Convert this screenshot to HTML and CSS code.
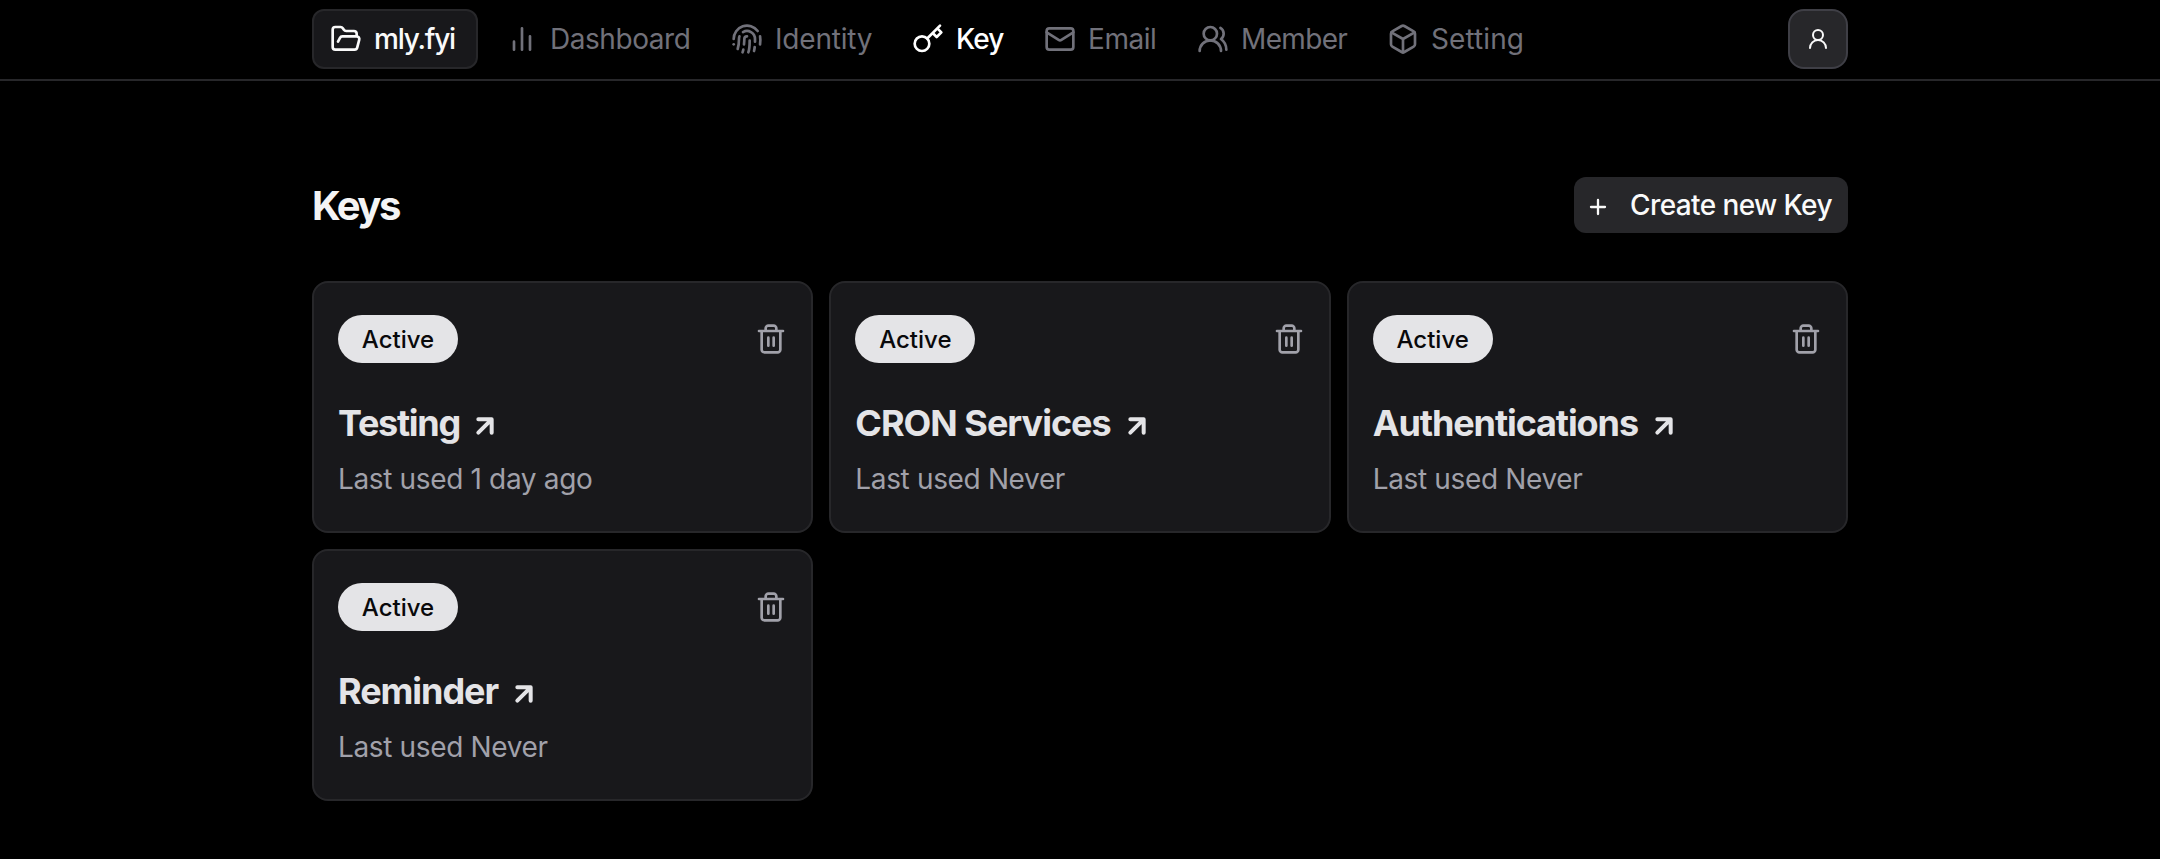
FILE: index.html
```html
<!DOCTYPE html>
<html lang="en">
<head>
<meta charset="utf-8">
<title>Keys</title>
<link rel="stylesheet" href="styles.css">
</head>
<body>
<svg class="sprite" aria-hidden="true">
  <symbol id="trash" viewBox="0 0 24 24"><path d="M3 6h18M19 6v14c0 1-1 2-2 2H7c-1 0-2-1-2-2V6M8 6V4c0-1 1-2 2-2h4c1 0 2 1 2 2v2M10 11v6M14 11v6"/></symbol>
  <symbol id="arrow" viewBox="0 0 24 24"><path d="M7 7h10v10M7 17 17 7"/></symbol>
</svg>
<header class="header">
  <div class="container bar">
    <a class="project"><svg class="icon" viewBox="0 0 24 24"><path d="m6 14 1.5-2.9A2 2 0 0 1 9.24 10H20a2 2 0 0 1 1.94 2.5l-1.54 6a2 2 0 0 1-1.95 1.5H4a2 2 0 0 1-2-2V5a2 2 0 0 1 2-2h3.9a2 2 0 0 1 1.69.9l.81 1.2a2 2 0 0 0 1.67.9H18a2 2 0 0 1 2 2v2"/></svg><span>mly.fyi</span></a>
    <nav class="nav">
      <a class="link dashboard"><svg class="icon" viewBox="0 0 24 24"><path d="M18 20V10M12 20V4M6 20v-6"/></svg><span>Dashboard</span></a>
      <a class="link identity"><svg class="icon" viewBox="0 0 24 24"><path d="M12 10a2 2 0 0 0-2 2c0 1.02-.1 2.51-.26 4"/><path d="M14 13.12c0 2.38 0 6.38-1 8.88"/><path d="M17.29 21.02c.12-.6.43-2.3.5-3.02"/><path d="M2 12a10 10 0 0 1 18-6"/><path d="M2 16h.01"/><path d="M21.8 16c.2-2 .131-5.354 0-6"/><path d="M5 19.5C5.5 18 6 15 6 12a6 6 0 0 1 .34-2"/><path d="M8.65 22c.21-.66.45-1.32.57-2"/><path d="M9 6.8a6 6 0 0 1 9 5.2v2"/></svg><span>Identity</span></a>
      <a class="link key active"><svg class="icon" viewBox="0 0 24 24"><circle cx="7.5" cy="15.5" r="5.5"/><path d="m21 2-9.6 9.6M15.5 7.5l3 3L22 7l-3-3"/></svg><span>Key</span></a>
      <a class="link email"><svg class="icon" viewBox="0 0 24 24"><rect width="20" height="16" x="2" y="4" rx="2"/><path d="m22 7-8.97 5.7a1.94 1.94 0 0 1-2.06 0L2 7"/></svg><span>Email</span></a>
      <a class="link member"><svg class="icon" viewBox="0 0 24 24"><path d="M18 21a8 8 0 0 0-16 0"/><circle cx="10" cy="8" r="5"/><path d="M22 20c0-3.37-2-6.5-4-8a5 5 0 0 0-.45-8.3"/></svg><span>Member</span></a>
      <a class="link setting"><svg class="icon" viewBox="0 0 24 24"><path d="M21 8a2 2 0 0 0-1-1.73l-7-4a2 2 0 0 0-2 0l-7 4A2 2 0 0 0 3 8v8a2 2 0 0 0 1 1.73l7 4a2 2 0 0 0 2 0l7-4A2 2 0 0 0 21 16Z"/><path d="m3.3 7 8.7 5 8.7-5M12 22V12"/></svg><span>Setting</span></a>
    </nav>
    <button class="avatar"><svg class="icon small" viewBox="0 0 24 24"><circle cx="12" cy="8" r="5"/><path d="M20 21a8 8 0 0 0-16 0"/></svg></button>
  </div>
</header>
<main class="container main">
  <div class="heading">
    <h1 class="title">Keys</h1>
    <button class="create"><svg class="icon small plus" viewBox="0 0 24 24"><path d="M5 12h14M12 5v14"/></svg><span>Create new Key</span></button>
  </div>
  <section class="grid">
    <article class="card">
      <div class="top"><span class="badge">Active</span><svg class="icon"><use href="#trash"/></svg></div>
      <h2 class="name testing">Testing<svg class="icon arrow"><use href="#arrow"/></svg></h2>
      <p class="used">Last used 1 day ago</p>
    </article>
    <article class="card">
      <div class="top"><span class="badge">Active</span><svg class="icon"><use href="#trash"/></svg></div>
      <h2 class="name cron">CRON Services<svg class="icon arrow"><use href="#arrow"/></svg></h2>
      <p class="used">Last used Never</p>
    </article>
    <article class="card">
      <div class="top"><span class="badge">Active</span><svg class="icon"><use href="#trash"/></svg></div>
      <h2 class="name auth">Authentications<svg class="icon arrow"><use href="#arrow"/></svg></h2>
      <p class="used">Last used Never</p>
    </article>
    <article class="card">
      <div class="top"><span class="badge">Active</span><svg class="icon"><use href="#trash"/></svg></div>
      <h2 class="name reminder">Reminder<svg class="icon arrow"><use href="#arrow"/></svg></h2>
      <p class="used">Last used Never</p>
    </article>
  </section>
</main>
</body>
</html>
```
FILE: styles.css
```css
* { box-sizing: border-box; margin: 0; padding: 0; }
body { background: #000; color: #fafafa; font: 400 28px/40px Inter, sans-serif; min-height: 859px; }
button { font: inherit; color: inherit; border: 0; }
.sprite { display: none; }
.container { width: 1536px; margin: 0 auto; }
.icon { width: 32px; height: 32px; flex: none; fill: none; stroke: currentColor; stroke-width: 2; stroke-linecap: round; stroke-linejoin: round; }
.icon.small { width: 24px; height: 24px; }
.header { height: 81px; border-bottom: 2px solid #27272a; }
.bar { display: flex; padding-top: 9px; }
.project { display: flex; align-items: center; gap: 12px; width: 166px; height: 60px; padding: 0 16px; border: 2px solid #27272a; border-radius: 12px; background: #18181b; font-weight: 500; letter-spacing: -1.2px; white-space: nowrap; }
.nav { display: flex; align-items: center; margin-left: 28px; color: #71717a; }
.link { display: flex; align-items: center; gap: 12px; letter-spacing: -0.45px; white-space: nowrap; }
.link.active { color: #fff; font-weight: 500; }
.dashboard { width: 225px; }
.identity { width: 181px; letter-spacing: -0.2px; }
.key { width: 132px; letter-spacing: -0.9px; }
.email { width: 153px; }
.member { width: 190px; letter-spacing: -0.65px; }
.setting { letter-spacing: 0.1px; }
.avatar { display: flex; align-items: center; justify-content: center; width: 60px; height: 60px; margin-left: auto; border: 2px solid #3f3f46; border-radius: 16px; background: #27272a; }
.main { padding-top: 96px; }
.heading { display: flex; justify-content: space-between; height: 56px; align-items: center; }
.title { padding-top: 2px; font-size: 40px; line-height: 56px; font-weight: 700; letter-spacing: -2.5px; color: #f4f4f5; }
.create { display: flex; align-items: center; gap: 20px; width: 274px; height: 56px; padding-left: 12px; border-radius: 12px; background: #27272a; font-weight: 500; letter-spacing: -0.6px; white-space: nowrap; }
.plus { margin-top: 4px; stroke-width: 2.3; }
.grid { display: grid; grid-template-columns: repeat(3, 1fr); gap: 16px; margin-top: 48px; }
.card { height: 252px; padding: 32px 24px; border: 2px solid #27272a; border-radius: 16px; background: #18181b; color: #a1a1aa; }
.top { display: flex; align-items: center; justify-content: space-between; }
.badge { width: 120px; height: 48px; padding-top: 1px; border-radius: 24px; background: #e4e4e7; color: #09090b; font-size: 24px; font-weight: 500; line-height: 47px; text-align: center; }
.name { display: flex; align-items: center; gap: 10px; height: 40px; margin-top: 40px; color: #e4e4e7; font-size: 36px; font-weight: 700; letter-spacing: -1.3px; white-space: nowrap; }
.cron { letter-spacing: -1px; }
.auth { letter-spacing: -1.1px; }
.reminder { letter-spacing: -1.05px; }
.testing { gap: 9px; }
.arrow { stroke-width: 3; margin-top: 6px; }
.used { margin-top: 16px; letter-spacing: -0.35px; }
```
